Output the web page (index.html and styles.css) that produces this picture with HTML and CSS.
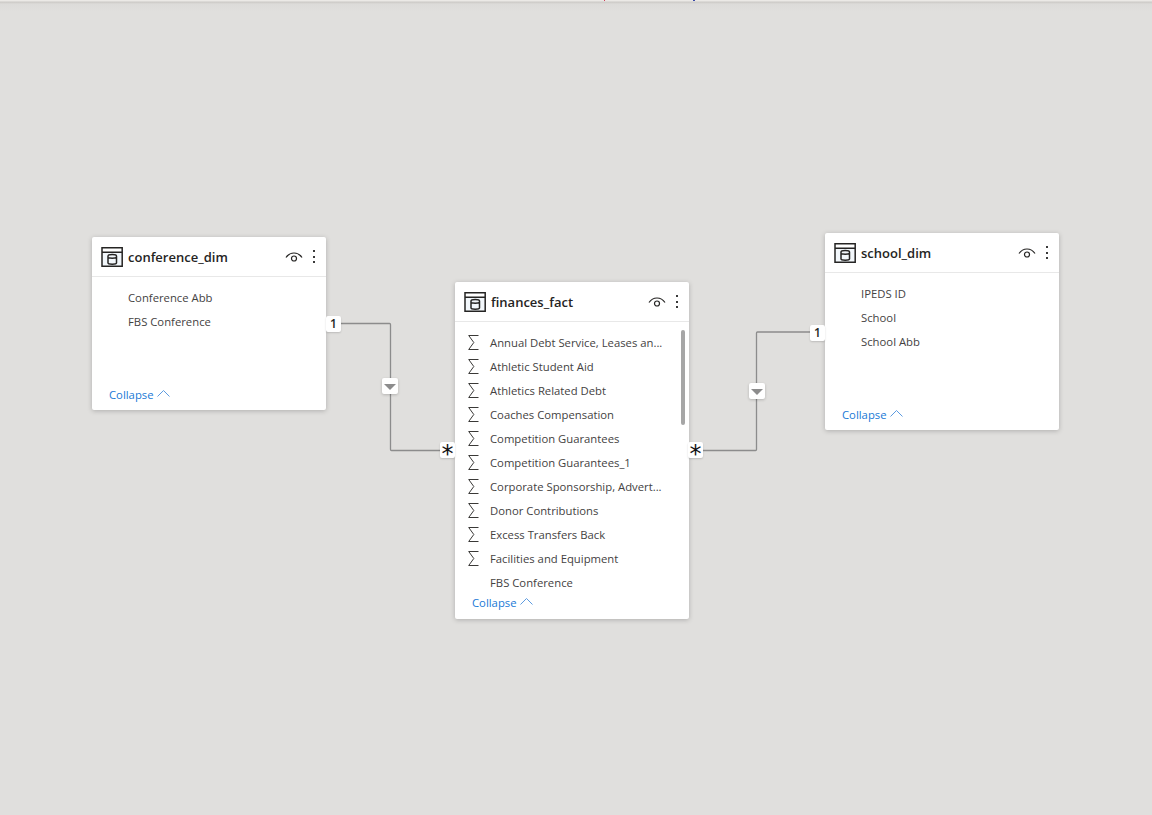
FILE: index.html
```html
<!DOCTYPE html>
<html lang="en">

<head>
    <meta charset="UTF-8">
    <title>Model view</title>
    <link rel="stylesheet" href="styles.css">
</head>

<body>
    <div class="canvas">
        <span class="speck speck_red"></span>
        <span class="speck speck_blue"></span>
        <svg class="lines" width="1152" height="815">
            <path d="M341 323.500H389.500Q390.500 323.500 390.500 324.500V449.500Q390.500 450.500 391.500 450.500H440" />
            <path d="M703 450.500H755.500Q756.500 450.500 756.500 449.500V333Q756.500 332 757.500 332H811" />
        </svg>

        <div class="card card_conf">
            <div class="head">
                <svg class="tableicon" width="22" height="20" viewBox="0 0 22 20">
                    <rect class="tint" x="1" y="5" width="20" height="14" />
                    <path d="M1 .8H21.200V19.200H1zM1 5.200H21.200" />
                    <path d="M7 9v7c0 1.600 8.500 1.600 8.500 0V9c0-2-8.500-2-8.500 0zM7 10c0 1.500 8.500 1.500 8.500 0" />
                </svg>
                <span class="name">conference_dim</span>
                <svg class="eye" width="18" height="12" viewBox="0 0 18 12">
                    <path d="M1 6.500C5 .5 13 .5 17 6.500" />
                    <circle cx="9" cy="7.500" r="2.500" />
                </svg>
                <span class="dots"><i></i><i></i><i></i></span>
            </div>
            <ul class="fields">
                <li>Conference Abb</li>
                <li>FBS Conference</li>
            </ul>
            <div class="collapse">Collapse <svg width="13" height="8" viewBox="0 0 13 8"><path d="M.5 7.500L6.500 1.500l6 6" /></svg></div>
        </div>

        <div class="card card_fact">
            <div class="head">
                <svg class="tableicon" width="22" height="20" viewBox="0 0 22 20">
                    <rect class="tint" x="1" y="5" width="20" height="14" />
                    <path d="M1 .8H21.200V19.200H1zM1 5.200H21.200" />
                    <path d="M7 9v7c0 1.600 8.500 1.600 8.500 0V9c0-2-8.500-2-8.500 0zM7 10c0 1.500 8.500 1.500 8.500 0" />
                </svg>
                <span class="name">finances_fact</span>
                <svg class="eye" width="18" height="12" viewBox="0 0 18 12">
                    <path d="M1 6.500C5 .5 13 .5 17 6.500" />
                    <circle cx="9" cy="7.500" r="2.500" />
                </svg>
                <span class="dots"><i></i><i></i><i></i></span>
            </div>
            <ul class="fields">
                <li><svg class="sigma" width="11" height="15" viewBox="0 0 11 15"><path d="M10.500 .5H.7L5.800 7.500.7 14.500H10.500" /></svg>Annual Debt Service, Leases an...</li>
                <li><svg class="sigma" width="11" height="15" viewBox="0 0 11 15"><path d="M10.500 .5H.7L5.800 7.500.7 14.500H10.500" /></svg>Athletic Student Aid</li>
                <li><svg class="sigma" width="11" height="15" viewBox="0 0 11 15"><path d="M10.500 .5H.7L5.800 7.500.7 14.500H10.500" /></svg>Athletics Related Debt</li>
                <li><svg class="sigma" width="11" height="15" viewBox="0 0 11 15"><path d="M10.500 .5H.7L5.800 7.500.7 14.500H10.500" /></svg>Coaches Compensation</li>
                <li><svg class="sigma" width="11" height="15" viewBox="0 0 11 15"><path d="M10.500 .5H.7L5.800 7.500.7 14.500H10.500" /></svg>Competition Guarantees</li>
                <li><svg class="sigma" width="11" height="15" viewBox="0 0 11 15"><path d="M10.500 .5H.7L5.800 7.500.7 14.500H10.500" /></svg>Competition Guarantees_1</li>
                <li><svg class="sigma" width="11" height="15" viewBox="0 0 11 15"><path d="M10.500 .5H.7L5.800 7.500.7 14.500H10.500" /></svg>Corporate Sponsorship, Advert...</li>
                <li><svg class="sigma" width="11" height="15" viewBox="0 0 11 15"><path d="M10.500 .5H.7L5.800 7.500.7 14.500H10.500" /></svg>Donor Contributions</li>
                <li><svg class="sigma" width="11" height="15" viewBox="0 0 11 15"><path d="M10.500 .5H.7L5.800 7.500.7 14.500H10.500" /></svg>Excess Transfers Back</li>
                <li><svg class="sigma" width="11" height="15" viewBox="0 0 11 15"><path d="M10.500 .5H.7L5.800 7.500.7 14.500H10.500" /></svg>Facilities and Equipment</li>
                <li>FBS Conference</li>
            </ul>
            <div class="scrollbar"></div>
            <div class="collapse">Collapse <svg width="13" height="8" viewBox="0 0 13 8"><path d="M.5 7.500L6.500 1.500l6 6" /></svg></div>
        </div>

        <div class="card card_school">
            <div class="head">
                <svg class="tableicon" width="22" height="20" viewBox="0 0 22 20">
                    <rect class="tint" x="1" y="5" width="20" height="14" />
                    <path d="M1 .8H21.200V19.200H1zM1 5.200H21.200" />
                    <path d="M7 9v7c0 1.600 8.500 1.600 8.500 0V9c0-2-8.500-2-8.500 0zM7 10c0 1.500 8.500 1.500 8.500 0" />
                </svg>
                <span class="name">school_dim</span>
                <svg class="eye" width="18" height="12" viewBox="0 0 18 12">
                    <path d="M1 6.500C5 .5 13 .5 17 6.500" />
                    <circle cx="9" cy="7.500" r="2.500" />
                </svg>
                <span class="dots"><i></i><i></i><i></i></span>
            </div>
            <ul class="fields">
                <li>IPEDS ID</li>
                <li>School</li>
                <li>School Abb</li>
            </ul>
            <div class="collapse">Collapse <svg width="13" height="8" viewBox="0 0 13 8"><path d="M.5 7.500L6.500 1.500l6 6" /></svg></div>
        </div>

        <div class="tag tag_a">1</div>
        <div class="tag tag_b star">*</div>
        <div class="tag tag_c star">*</div>
        <div class="tag tag_d">1</div>
        <div class="filter filter_a"></div>
        <div class="filter filter_b"></div>
    </div>
</body>

</html>
```

FILE: styles.css
```css
html,
body {
    margin: 0;
    padding: 0;
    height: 100%;
    overflow: hidden;
}

body {
    background-color: #e0dfdd;
    font-family: "Open Sans", "Noto Sans", sans-serif;
}

.canvas {
    position: relative;
    width: 1152px;
    height: 815px;
    background: linear-gradient(#ebe9e6 0, #ebe9e6 1px, #cbc9c6 2px, #dcdbd9 4px, #e0dfdd 12px);
}

.speck {
    position: absolute;
    top: 0;
    height: 1px;
}

.speck_red {
    left: 604px;
    width: 1px;
    background-color: #d0405a;
}

.speck_blue {
    left: 693px;
    width: 2px;
    background-color: #3b4aa8;
}

.lines {
    position: absolute;
    top: 0;
    left: 0;
}

.lines path {
    fill: none;
    stroke: #8c8c8c;
    stroke-width: 1.300;
}

.card {
    position: absolute;
    width: 234px;
    background-color: #fff;
    border-radius: 2px;
    box-shadow: 0 1px 5px rgba(0, 0, 0, 0.22);
}

.card_conf {
    left: 92px;
    top: 237px;
    height: 173px;
}

.card_fact {
    left: 455px;
    top: 282px;
    height: 337px;
}

.card_school {
    left: 825px;
    top: 233px;
    height: 197px;
}

.head {
    display: flex;
    align-items: center;
    height: 39px;
    padding: 0 8px 0 9px;
    border-bottom: 1px solid #e8e8e8;
}

.tableicon {
    flex: none;
    margin-right: 5px;
}

.tableicon path {
    fill: none;
    stroke: #252423;
    stroke-width: 1.500;
}

.tableicon .tint {
    fill: #f2f7fb;
}

.name {
    flex: 1;
    font-size: 13px;
    font-weight: 600;
    color: #252423;
}

.eye {
    flex: none;
    margin-right: 10px;
}

.eye path,
.eye circle {
    fill: none;
    stroke: #252423;
    stroke-width: 1.200;
}

.dots {
    display: flex;
    flex-direction: column;
    gap: 3.500px;
    width: 3px;
    margin-right: 2px;
}

.dots i {
    display: block;
    width: 2px;
    height: 2px;
    background-color: #3a3a3a;
}

.fields {
    list-style: none;
    margin: 0;
    padding: 9px 0 0 36px;
}

.card_fact .fields {
    padding-left: 35px;
}

.fields li {
    position: relative;
    height: 24px;
    line-height: 24px;
    font-size: 11.300px;
    color: #44423f;
    white-space: nowrap;
}

.sigma {
    position: absolute;
    left: -22px;
    top: 4px;
}

.sigma path {
    fill: none;
    stroke: #3a3937;
    stroke-width: 1;
}

.scrollbar {
    position: absolute;
    top: 48px;
    left: 226px;
    width: 4px;
    height: 95px;
    border-radius: 2px;
    background-color: #a6a6a6;
}

.collapse {
    position: absolute;
    left: 17px;
    bottom: 6px;
    font-size: 11.300px;
    line-height: 18px;
    color: #2079d6;
}

.card_fact .collapse {
    bottom: 7px;
}

.collapse svg {
    margin-left: 1px;
    vertical-align: 2px;
}

.collapse path {
    fill: none;
    stroke: #5d9be0;
    stroke-width: 1;
}

.tag {
    position: absolute;
    width: 15px;
    height: 16px;
    background-color: #fff;
    border-radius: 2px;
    box-shadow: 0 1px 2px rgba(0, 0, 0, 0.16);
    font-size: 12px;
    font-weight: 600;
    line-height: 16px;
    text-align: center;
    color: #252423;
}

.star {
    font-family: "DejaVu Sans", sans-serif;
    font-size: 24px;
    line-height: 25px;
    font-weight: 400;
    color: #111;
}

.tag_a {
    left: 326px;
    top: 316px;
}

.tag_b {
    left: 440px;
    top: 442px;
}

.tag_c {
    left: 688px;
    top: 442px;
}

.tag_d {
    left: 810px;
    top: 325px;
}

.filter {
    position: absolute;
    width: 16px;
    height: 16px;
    background-color: #fff;
    border-radius: 2px;
    box-shadow: 0 1px 3px rgba(0, 0, 0, 0.2);
}

.filter::after {
    content: "";
    position: absolute;
    left: 2px;
    top: 6px;
    border: 6px solid transparent;
    border-top: 6px solid #8c8c8c;
    border-bottom: 0;
}

.filter_a {
    left: 382px;
    top: 378px;
}

.filter_b {
    left: 749px;
    top: 383px;
}
```
